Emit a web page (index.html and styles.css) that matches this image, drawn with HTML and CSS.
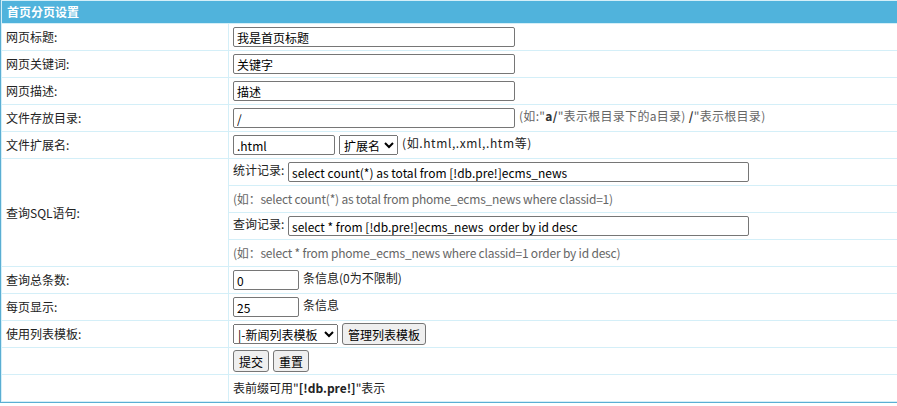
FILE: index.html
```html
<!DOCTYPE html>
<html>
<head>
<meta charset="utf-8">
<link rel="stylesheet" href="styles.css">
</head>
<body>
<table class="tb">
  <tr><td class="head" colspan="2">首页分页设置</td></tr>
  <tr><td class="lab">网页标题:</td><td class="val"><input class="w282" value="我是首页标题"></td></tr>
  <tr><td class="lab">网页关键词:</td><td class="val"><input class="w282" value="关键字"></td></tr>
  <tr><td class="lab">网页描述:</td><td class="val"><input class="w282" value="描述"></td></tr>
  <tr><td class="lab">文件存放目录:</td><td class="val"><input class="w282 gap" value="/"><span class="note wide">(如:"<b>a/</b>"表示根目录下的a目录) <b>/</b>"表示根目录)</span></td></tr>
  <tr><td class="lab">文件扩展名:</td><td class="val"><input class="w102 gap" value=".html"><select class="sel1 gap"><option>扩展名</option></select><span class="wider">(如.html,.xml,.htm等)</span></td></tr>
  <tr><td class="lab">查询SQL语句:</td><td class="nest">
    <table class="inner">
      <tr><td class="val">统计记录: <input class="w461" value="select count(*) as total from [!db.pre!]ecms_news"></td></tr>
      <tr><td class="val note tight">(如：select count(*) as total from phome_ecms_news where classid=1)</td></tr>
      <tr><td class="val">查询记录: <input class="w461" value="select * from [!db.pre!]ecms_news  order by id desc"></td></tr>
      <tr><td class="val note tight">(如：select * from phome_ecms_news where classid=1 order by id desc)</td></tr>
    </table>
  </td></tr>
  <tr><td class="lab">查询总条数:</td><td class="val"><input class="w66 gap" value="0">条信息(0为不限制)</td></tr>
  <tr><td class="lab">每页显示:</td><td class="val"><input class="w66 gap" value="25">条信息</td></tr>
  <tr><td class="lab">使用列表模板:</td><td class="val"><select class="sel2 gap"><option>|-新闻列表模板</option></select><button class="btn">管理列表模板</button></td></tr>
  <tr><td class="lab"></td><td class="val"><button class="btn gap">提交</button><button class="btn">重置</button></td></tr>
  <tr><td class="lab"></td><td class="val">表前缀可用"<b>[!db.pre!]</b>"表示</td></tr>
</table>
</body>
</html>
```
FILE: styles.css
```css
html, body {
  margin: 0;
  padding: 0;
  overflow: hidden;
  background: #fff;
}
body {
  font-family: "Noto Sans CJK SC", sans-serif;
  font-size: 12px;
  color: #222;
}
.tb {
  width: 900px;
  border-collapse: separate;
  border-spacing: 1px;
  background: #d4eff8;
  border-left: 1px solid #5aaed3;
  border-bottom: 1px solid #5aaed3;
  margin: 0;
}
.tb td {
  background: #fff;
  padding: 0 3px 0 4px;
  height: 26px;
  line-height: 16px;
  white-space: nowrap;
}
.tb td.head {
  background: #50b3dc;
  color: #fff;
  font-weight: bold;
  height: 22px;
  padding: 0 5px;
}
.tb td.lab {
  width: 220px;
  padding: 0 2px 0 4px;
}
.tb td.nest {
  padding: 0;
  height: auto;
  background: #d4eff8;
}
.inner {
  width: 100%;
  border-collapse: separate;
  border-spacing: 0 1px;
  margin: -1px 0;
  background: #d4eff8;
}
.inner td {
  height: 26px;
}
.note {
  color: #666;
}
.note b {
  color: #333;
}
.tight {
  letter-spacing: -0.2px;
}
.wide {
  letter-spacing: 0.3px;
}
.wider {
  letter-spacing: 0.6px;
}
.gap {
  margin-right: 4px !important;
}
input, select, button {
  font-family: "Noto Sans CJK SC", sans-serif;
  font-size: 12px;
  box-sizing: border-box;
  height: 20px;
  margin: 0;
  vertical-align: middle;
  color: #000;
  letter-spacing: 0;
}
input {
  border: 1px solid #767676;
  border-radius: 2px;
  padding: 0 3px;
}
.w282 { width: 282px; }
.w102 { width: 102px; }
.w461 { width: 461px; margin-left: 1px; }
.w66 { width: 66px; }
.sel1 { width: 59px; height: 20px; }
.sel2 { width: 105px; height: 20px; }
button.btn {
  height: 22px;
  padding: 0 5px;
  border: 1px solid #767676;
  border-radius: 3px;
  background: #efefef;
}
```
